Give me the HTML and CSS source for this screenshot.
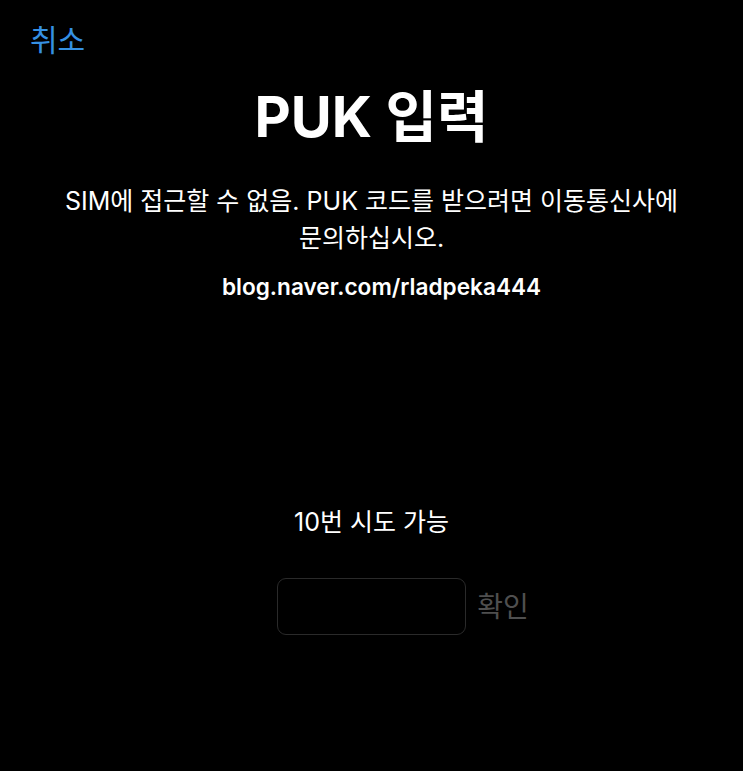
FILE: index.html
```html
<!DOCTYPE html>
<html lang="ko">
<head>
<meta charset="utf-8">
<link rel="stylesheet" href="styles.css">
</head>
<body>
<div class="screen">
  <div class="topbar"><span class="cancel">취소</span></div>
  <h1 class="title">PUK 입력</h1>
  <p class="desc">SIM에 접근할 수 없음. PUK 코드를 받으려면 이동통신사에<br>문의하십시오.</p>
  <p class="url">blog.naver.com/rladpeka444</p>
  <p class="tries">10번 시도 가능</p>
  <div class="entry">
    <div class="field"></div>
    <span class="ok">확인</span>
  </div>
</div>
</body>
</html>
```
FILE: styles.css
```css
html, body {
  margin: 0;
  padding: 0;
  background: #000;
}
.screen {
  width: 743px;
  height: 771px;
  background: #000;
  color: #fff;
  font-family: Inter, "Noto Sans CJK KR", sans-serif;
  display: flex;
  flex-direction: column;
  align-items: center;
}
.topbar {
  align-self: stretch;
  padding: 20px 0 0 30px;
  height: 44px;
}
.cancel {
  color: #3590e3;
  font-size: 30px;
  line-height: 40px;
}
.title {
  margin: 21px 0 0;
  font-size: 56px;
  font-weight: 700;
  line-height: 64px;
  letter-spacing: 0;
}
.desc {
  margin: 34px 0 0;
  font-size: 25px;
  line-height: 37px;
  text-align: center;
  letter-spacing: 0;
}
.url {
  margin: 15px 0 0 20px;
  font-size: 22.6px;
  font-weight: 600;
  line-height: 30px;
}
.tries {
  margin: 202px 0 0;
  font-size: 25px;
  line-height: 36px;
}
.entry {
  margin: 38px 0 0 63px;
  display: flex;
  align-items: center;
  gap: 11px;
}
.field {
  width: 187px;
  height: 55px;
  border: 1px solid #2a2a2a;
  border-radius: 9px;
}
.ok {
  color: #4f4f4f;
  font-size: 28px;
  line-height: 40px;
}
```
